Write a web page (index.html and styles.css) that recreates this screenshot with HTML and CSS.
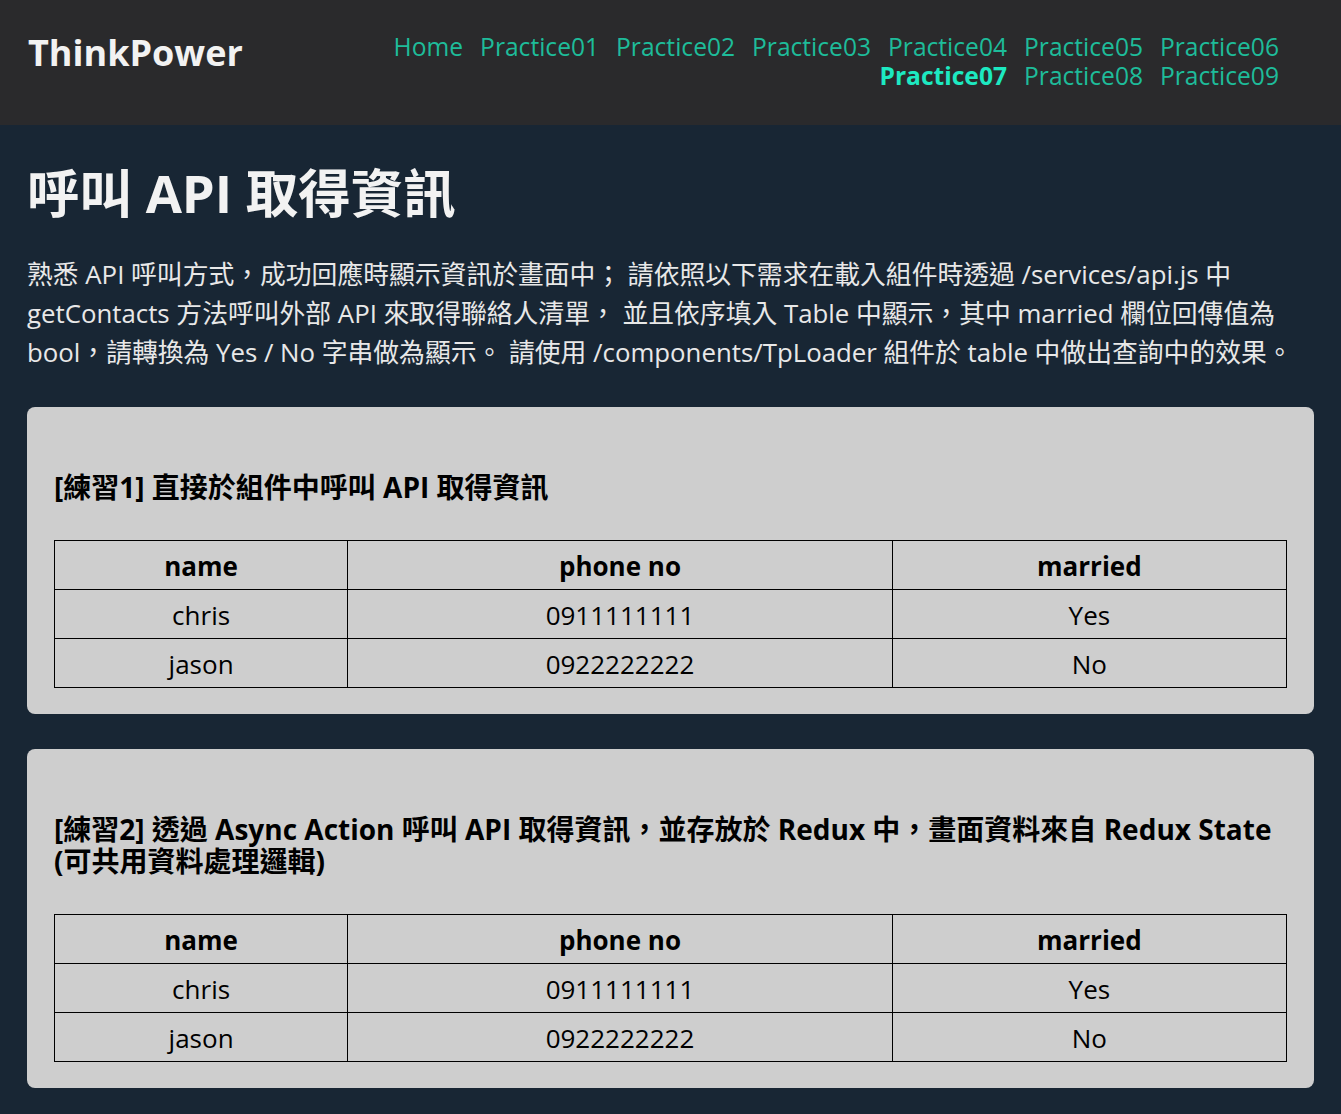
FILE: index.html
```html
<!DOCTYPE html>
<html lang="zh-Hant">
<head>
<meta charset="utf-8">
<title>ThinkPower</title>
<link rel="stylesheet" href="styles.css">
</head>
<body>
<header class="topbar">
  <div class="logo">ThinkPower</div>
  <nav class="nav">
    <a class="nav-link" href="#">Home</a>
    <a class="nav-link" href="#">Practice01</a>
    <a class="nav-link" href="#">Practice02</a>
    <a class="nav-link" href="#">Practice03</a>
    <a class="nav-link" href="#">Practice04</a>
    <a class="nav-link" href="#">Practice05</a>
    <a class="nav-link" href="#">Practice06</a>
    <a class="nav-link active" href="#">Practice07</a>
    <a class="nav-link" href="#">Practice08</a>
    <a class="nav-link" href="#">Practice09</a>
  </nav>
</header>
<main class="content">
  <h1 class="page-title">呼叫 API 取得資訊</h1>
  <p class="intro">熟悉 API 呼叫方式，成功回應時顯示資訊於畫面中； 請依照以下需求在載入組件時透過 /services/api.js 中 getContacts 方法呼叫外部 API 來取得聯絡人清單， 並且依序填入 Table 中顯示，其中 married 欄位回傳值為 bool，請轉換為 Yes / No 字串做為顯示。 請使用 /components/TpLoader 組件於 table 中做出查詢中的效果。</p>

  <section class="card">
    <h3 class="card-title">[練習1] 直接於組件中呼叫 API 取得資訊</h3>
    <table class="contacts">
      <colgroup><col class="c-name"><col class="c-phone"><col class="c-married"></colgroup>
      <thead><tr><th>name</th><th>phone no</th><th>married</th></tr></thead>
      <tbody>
        <tr><td>chris</td><td>0911111111</td><td>Yes</td></tr>
        <tr><td>jason</td><td>0922222222</td><td>No</td></tr>
      </tbody>
    </table>
  </section>

  <section class="card">
    <h3 class="card-title">[練習2] 透過 Async Action 呼叫 API 取得資訊，並存放於 Redux 中，畫面資料來自 Redux State (可共用資料處理邏輯)</h3>
    <table class="contacts">
      <colgroup><col class="c-name"><col class="c-phone"><col class="c-married"></colgroup>
      <thead><tr><th>name</th><th>phone no</th><th>married</th></tr></thead>
      <tbody>
        <tr><td>chris</td><td>0911111111</td><td>Yes</td></tr>
        <tr><td>jason</td><td>0922222222</td><td>No</td></tr>
      </tbody>
    </table>
  </section>
</main>
</body>
</html>
```

FILE: styles.css
```css
* { box-sizing: border-box; }

body {
  margin: 0;
  background: #182634;
  font-family: "Open Sans", "Noto Sans CJK TC", sans-serif;
  color: #ececec;
}

.topbar {
  height: 125px;
  background: #2a2a2c;
  display: flex;
  justify-content: space-between;
  align-items: flex-start;
  padding: 28px 62px 0 28px;
}

.logo {
  font-size: 36px;
  font-weight: 700;
  color: #f2f2f2;
  line-height: 49px;
}

.nav {
  width: 900px;
  margin-top: 4px;
  display: flex;
  flex-wrap: wrap;
  justify-content: flex-end;
  column-gap: 17px;
}

.nav-link {
  font-size: 24.6px;
  line-height: 29px;
  color: #1ebc9a;
  text-decoration: none;
}

.nav-link.active {
  font-weight: 700;
  color: #1de9c1;
}

.content {
  padding: 0 27px 27px;
}

.page-title {
  margin: 37px 0 0;
  font-size: 52.5px;
  line-height: 61px;
  font-weight: 700;
  color: #f2f2f2;
}

.intro {
  margin: 32px 0 35px;
  font-size: 25.8px;
  line-height: 39px;
  color: #e8e8e8;
}

.card {
  background: #cecece;
  border-radius: 8px;
  padding: 27px 27px 26px;
  margin-bottom: 35px;
  color: #000;
}

.card:last-child { margin-bottom: 0; }

.card-title {
  margin: 37px 0 37px;
  font-size: 28px;
  line-height: 32px;
  font-weight: 700;
}

.contacts {
  width: 100%;
  border-collapse: collapse;
  table-layout: fixed;
}

.c-name { width: 23.8%; }
.c-phone { width: 44.2%; }
.c-married { width: 32%; }

.contacts th,
.contacts td {
  border: 1px solid #000;
  text-align: center;
  font-size: 26px;
  line-height: 34px;
  padding: 8px 4px 6px;
}

.contacts th { font-weight: 700; }
.contacts td { font-weight: 400; }
```
